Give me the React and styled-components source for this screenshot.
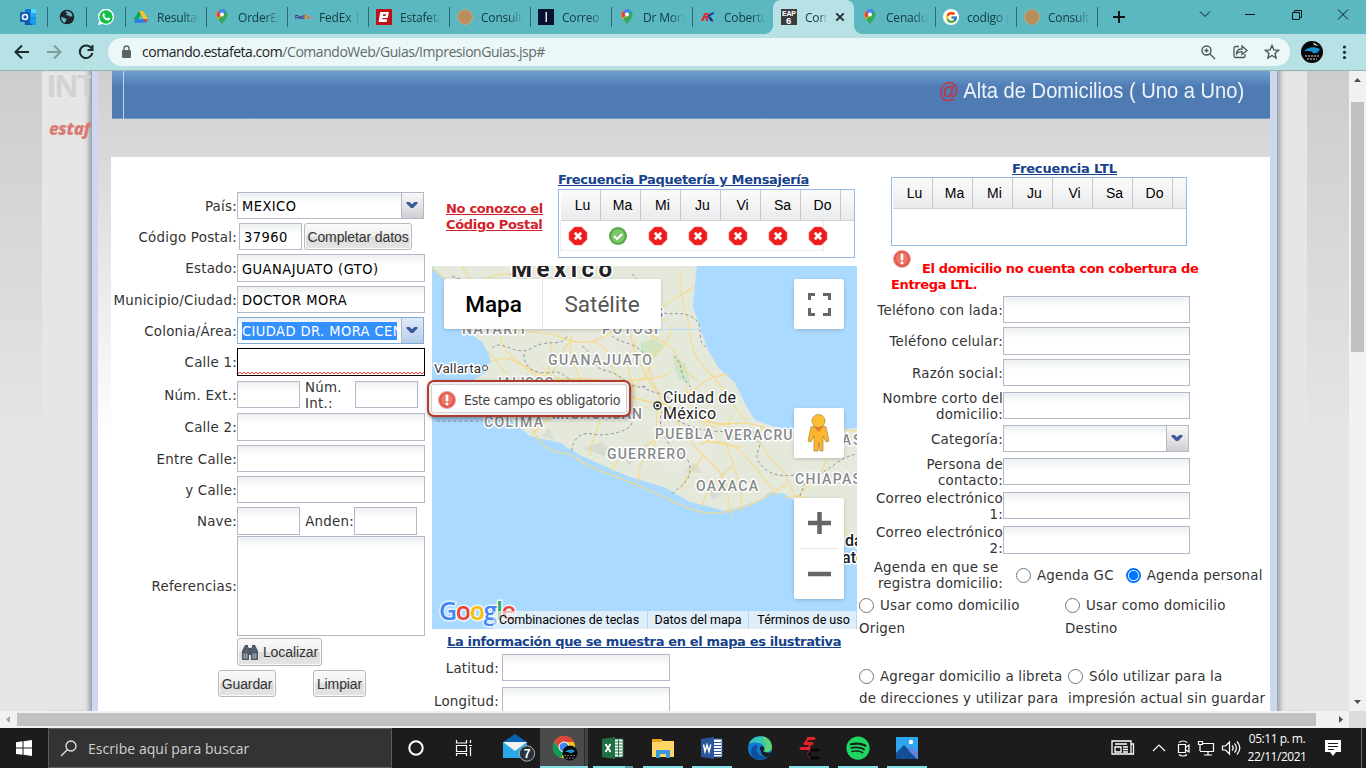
import React from "react";
import styled, { createGlobalStyle, css } from "styled-components";
import { FaSpotify } from "react-icons/fa";
import { FcGoogle } from "react-icons/fc";

const verdana = `"DejaVu Sans", Verdana, sans-serif`;
const tahoma = `"DejaVu Sans Condensed", "DejaVu Sans", Tahoma, sans-serif`;
const segoe = `"Open Sans", "Segoe UI", sans-serif`;
const arial = `"Liberation Sans", Arial, sans-serif`;

const Global = createGlobalStyle`
  * { box-sizing: border-box; }
  body { margin: 0; overflow: hidden; }
  #root { width: 1366px; height: 768px; }
`;

const Screen = styled.div`
  width: 1366px;
  height: 768px;
  display: flex;
  flex-direction: column;
  overflow: hidden;
  font-family: ${verdana};
`;

/* ---------- browser chrome ---------- */

const TabStrip = styled.div`
  height: 34px;
  flex: none;
  display: flex;
  padding-left: 8px;
  background: #5bb8c1;
  font: 12px ${segoe};
  color: #123a3f;
`;

const Tab = styled.div`
  position: relative;
  width: ${(p) => (p.$pinned ? 39 : 81)}px;
  flex: none;
  display: flex;
  align-items: center;
  gap: 8px;
  padding-left: ${(p) => (p.$pinned ? 12 : 8)}px;
  ${(p) =>
    p.$active
      ? css`
          background: #b7e1e4;
          border-radius: 8px 8px 0 0;
          &::before, &::after {
            content: "";
            position: absolute;
            bottom: 0;
            width: 8px;
            height: 8px;
          }
          &::before { left: -8px; background: radial-gradient(circle at 0 0, transparent 7.5px, #b7e1e4 8px); }
          &::after { right: -8px; background: radial-gradient(circle at 100% 0, transparent 7.5px, #b7e1e4 8px); }
        `
      : p.$line &&
        css`
          &::after {
            content: "";
            position: absolute;
            right: -1px;
            top: 7px;
            width: 1px;
            height: 20px;
            background: #2f6a70;
          }
        `}
`;

const TabIcon = styled.span`
  width: 16px;
  height: 16px;
  flex: none;
  display: flex;
  svg { display: block; width: 16px; height: 16px; }
`;

const TabTitle = styled.span`
  width: ${(p) => p.$w || 42}px;
  overflow: hidden;
  white-space: nowrap;
  line-height: 17px;
  letter-spacing: -0.2px;
  mask-image: linear-gradient(90deg, #000 65%, transparent);
`;

const WindowButtons = styled.div`
  flex: 1;
  display: flex;
  align-items: center;
  svg { display: block; flex: none; }
`;

const Toolbar = styled.div`
  height: 37px;
  flex: none;
  display: flex;
  align-items: center;
  padding-left: 13px;
  background: #b7e1e4;
  border-bottom: 1px solid #93b4b7;
  svg { display: block; flex: none; }
`;

const NavButtons = styled.div`
  width: 95px;
  display: flex;
  gap: 14px;
`;

const Omnibox = styled.div`
  width: 1182px;
  height: 28px;
  display: flex;
  align-items: center;
  padding: 0 9px 0 12px;
  border-radius: 14px;
  background: #ecf8f8;
  font: 14px ${segoe};
  color: #61696b;
`;

const Url = styled.span`
  flex: 1;
  margin-left: 10px;
  padding-bottom: 1px;
  white-space: nowrap;
  letter-spacing: -0.46px;
  b { font-weight: 400; color: #1d2224; }
`;

const OmniIcons = styled.div`
  display: flex;
  gap: 14px;
`;

const Avatar = styled.span`
  margin: 0 11px 0 11px;
  display: flex;
`;

/* ---------- page ---------- */

const Viewport = styled.div`
  height: 640px;
  flex: none;
  display: flex;
`;

const PageBack = styled.div`
  width: ${(p) => p.$w}px;
  flex: none;
  background: linear-gradient(#cdcdcd, #e6e6e6 380px);
`;

const SidePage = styled.div`
  width: ${(p) => p.$w}px;
  flex: none;
  overflow: hidden;
  background: #e6e6e6;
  box-shadow: inset ${(p) => (p.$right ? "5px" : "-5px")} 0 5px -3px #9b9b9b;
`;

const FadedTitle = styled.div`
  padding-left: 5px;
  font: bold 32px/30px "Liberation Sans", Arial, sans-serif;
  letter-spacing: -1px;
  color: #d2d2d2;
`;

const FadedBrand = styled.div`
  margin-top: 17px;
  padding-left: 7px;
  font: italic 800 17px/22px "Open Sans", sans-serif;
  letter-spacing: -0.5px;
  color: #da7c74;
`;

const Frame = styled.div`
  width: ${(p) => p.$w}px;
  flex: none;
  background: #cdd9ea;
  ${(p) => (p.$right ? "border-right" : "border-left")}: 1px solid #8fa8cc;
`;

const Dialog = styled.div`
  width: 1172px;
  flex: none;
  padding-left: 13px;
  background: linear-gradient(#cfcfcf, #d9d9d9 86px, #fff 370px);
`;

const Banner = styled.div`
  height: 48px;
  margin-left: 1px;
  padding: 0 26px 8px 11px;
  display: flex;
  justify-content: space-between;
  background: linear-gradient(#6f9fd0, #4f7bb3 16px);
  border-bottom: 1px solid #7b9cc9;
`;

const BannerRule = styled.div`
  width: 1px;
  height: 48px;
  background: #c3d3e8;
`;

const BannerTitle = styled.div`
  font: 22px/39px ${arial};
  color: #eef3fa;
  white-space: nowrap;
  transform: scaleX(0.915);
  transform-origin: right center;
  span { color: #c9303a; }
`;

const Panel = styled.div`
  height: 554px;
  margin-top: 38px;
  display: flex;
  overflow: hidden;
  background: #fff;
  color: #333;
  font-size: 13.4px;
  letter-spacing: 0.24px;
  line-height: 16px;
`;

const LeftColumn = styled.div`
  width: 317px;
  padding-top: 35px;
  flex: none;
`;

const MidColumn = styled.div`
  width: 430px;
  flex: none;
  padding-left: 4px;
`;

const RightColumn = styled.div`
  width: 412px;
  flex: none;
`;

const Row = styled.div`
  height: ${(p) => p.$h || 27}px;
  margin-top: ${(p) => p.$mt ?? 4}px;
  display: flex;
  align-items: center;
`;

const Label = styled.label`
  width: ${(p) => p.$w || 126}px;
  flex: none;
  padding: 2px 0 0 ${(p) => p.$pl || 0}px;
  text-align: ${(p) => p.$align || "right"};
  white-space: pre-line;
`;

const fieldLook = css`
  border: 1px solid #b5b8c8;
  background: linear-gradient(#eceff0, #fff 10px);
`;

const Field = styled.div`
  width: ${(p) => p.$w || 188}px;
  height: 100%;
  flex: none;
  margin-left: ${(p) => p.$ml || 0}px;
  padding: 1px 0 0 4px;
  display: flex;
  align-items: center;
  font-family: ${tahoma};
  font-size: 14.5px;
  letter-spacing: 0.48px;
  color: #000;
  white-space: nowrap;
  ${fieldLook}
  ${(p) => p.$invalid && css`border-color: #000; background: #fff; padding: 0; align-items: flex-end;`}
`;

const Select = styled.div`
  width: ${(p) => p.$w || 187}px;
  height: 100%;
  flex: none;
  display: flex;
  align-items: center;
  font-family: ${tahoma};
  font-size: 14.5px;
  letter-spacing: 0.45px;
  color: #000;
  ${fieldLook}
  border-color: ${(p) => (p.$focus ? "#7eadd9" : "#b5b8c8")};
`;

const SelectValue = styled.span`
  flex: 1;
  margin: 0 4px;
  height: 18px;
  line-height: 18px;
  overflow: hidden;
  white-space: nowrap;
  ${(p) => p.$focus && css`background: #3390ff; color: #fff;`}
`;

const Trigger = styled.span`
  width: 22px;
  height: 100%;
  display: flex;
  align-items: center;
  justify-content: center;
  border-left: 1px solid #b5b8c8;
  padding: 0 2px 2px 0;
  background: ${(p) =>
    p.$focus ? "linear-gradient(#dfeaf8, #cbdcf1 50%, #b6cdea)" : "linear-gradient(#f7f7f7, #e6e6e8 50%, #cfcfd1)"};
`;

const Button = styled.button`
  height: 100%;
  width: ${(p) => p.$w}px;
  margin: 0 0 0 ${(p) => p.$ml || 0}px;
  padding: 0;
  display: flex;
  align-items: center;
  justify-content: center;
  gap: 4px;
  border: 1px solid #b9b9b9;
  border-radius: 3px;
  box-shadow: inset 0 0 0 1px #fafafa;
  background: linear-gradient(#fafafa, #efefef 48%, #dcdcdc 52%, #e4e4e4);
  font: 14px/16px ${arial};
  letter-spacing: -0.1px;
  white-space: nowrap;
  color: #333;
`;

const LinkTitle = styled.div`
  padding-left: ${(p) => p.$pl || 0}px;
  padding-top: ${(p) => p.$pt || 0}px;
  font-size: 13px;
  line-height: 16px;
  font-weight: 700;
  font-family: ${verdana};
  letter-spacing: ${(p) => p.$ls ?? -0.32}px;
  text-decoration: underline;
  color: ${(p) => p.$color || "#15428b"};
  white-space: pre-line;
`;

const FrequencyRow = styled.div`
  height: 109px;
  padding: 14px 0 0 14px;
  display: flex;
`;

const UnknownCode = styled.div`
  width: 112px;
  padding-top: 30px;
`;

const DayGrid = styled.div`
  width: ${(p) => p.$w || 297}px;
  height: 69px;
  border: 1px solid #99bbe8;
  margin: ${(p) => p.$m || 0};
`;

const DayHead = styled.div`
  height: 31px;
  display: flex;
  margin-left: ${(p) => p.$ml}px;
  border-bottom: 1px solid #d0d0d0;
  background: linear-gradient(#fafafa, #f4f4f5 50%, #e9eaec);
  font: 14px/31px ${arial};
  letter-spacing: 0;
  color: #000;
`;

const DayCell = styled.div`
  width: 40px;
  flex: none;
  padding-left: 4px;
  text-align: center;
  border-right: 1px solid #c8c8c8;
`;

const DayMarks = styled.div`
  width: 264px;
  height: 30px;
  margin-left: 1px;
  display: flex;
  border: 1px solid #ededed;
  border-top: 0;
`;

const Mark = styled.span`
  width: 40px;
  flex: none;
  display: flex;
  align-items: center;
  justify-content: center;
  padding: 0 6px 0 0;
`;

/* ---------- map ---------- */

const MapBox = styled.div`
  position: relative;
  width: 425px;
  height: 363px;
  background: #aadaff;
  letter-spacing: 0;
  > svg { display: block; }
`;

const MapTypes = styled.div`
  position: absolute;
  left: 12px;
  top: 13px;
  width: 217px;
  height: 50px;
  display: flex;
  background: #fff;
  border-radius: 2px;
  box-shadow: 0 1px 4px -1px rgba(0, 0, 0, 0.3);
  font: 22.5px/50px Roboto, sans-serif;
  color: #565656;
  text-align: center;
`;

const MapType = styled.div`
  width: ${(p) => p.$w}px;
  padding-left: ${(p) => (p.$on ? 1 : 0)}px;
  ${(p) => p.$on && css`color: #000; font-weight: 500; border-right: 1px solid #e6e6e6;`}
`;

const MapControl = styled.div`
  position: absolute;
  left: 362px;
  top: ${(p) => p.$top}px;
  width: 50px;
  height: ${(p) => p.$h || 50}px;
  background: #fff;
  border-radius: 2px;
  box-shadow: 0 1px 4px -1px rgba(0, 0, 0, 0.3);
  svg { display: block; }
`;

const MapFooter = styled.div`
  position: absolute;
  right: 0;
  bottom: 0;
  width: 364px;
  height: 18px;
  display: flex;
  font: 12.5px/17px Roboto, sans-serif;
  color: #000;
  white-space: nowrap;
`;

const MapNote = styled.span`
  width: ${(p) => p.$w}px;
  padding-left: ${(p) => p.$pl || 6}px;
  margin-right: 1px;
  background: linear-gradient(90deg, rgba(245, 245, 245, ${(p) => (p.$fade ? 0.55 : 0.7)}), rgba(245, 245, 245, 0.7) 20px);
`;

const ErrorTip = styled.div`
  position: absolute;
  left: -5px;
  top: 114px;
  width: 204px;
  height: 37px;
  display: flex;
  align-items: center;
  gap: 8px;
  padding: 2px 0 0 9px;
  border: 2px solid #b03a2e;
  border-radius: 7px;
  background: #fff;
  box-shadow: inset 0 0 0 2px #f0f0f0, inset 0 0 0 3px #d2d2d2, 1px 2px 4px rgba(0, 0, 0, 0.4);
  font: 14px/16px ${tahoma};
  letter-spacing: -0.3px;
  color: #444;
  white-space: nowrap;
`;

/* ---------- right column ---------- */

const CoverageError = styled.div`
  height: 44px;
  margin: 4px 0 2px 33px;
  font: bold 13px/16px ${verdana};
  letter-spacing: -0.37px;
  color: #f00;
  svg { display: block; }
`;

const CoverageLine = styled.div`
  display: flex;
  gap: 11px;
  height: 27px;
  margin-left: 2px;
  align-items: flex-start;
  span { padding-top: 11px; }
`;

const Radio = styled.span`
  display: inline-block;
  width: 15px;
  height: 15px;
  flex: none;
  margin: 0 6px 0 0;
  vertical-align: -3px;
  border-radius: 50%;
  border: 1px solid ${(p) => (p.$on ? "#0075ff" : "#767676")};
  ${(p) => p.$on && css`border-width: 2px; background: radial-gradient(circle, #0075ff 4.3px, #fff 5px);`}
`;

const RadioLabel = styled.span`
  display: flex;
  align-items: center;
  margin-left: ${(p) => p.$ml}px;
  white-space: nowrap;
`;

const RadioText = styled.span`
  padding-top: 1px;
  letter-spacing: 0.18px;
`;

const Choices = styled.div`
  display: flex;
  margin-top: ${(p) => p.$mt}px;
  height: 46px;
  line-height: ${(p) => p.$lh}px;
  letter-spacing: 0.19px;
`;

const Choice = styled.div`
  width: ${(p) => p.$w}px;
  flex: none;
  padding-left: ${(p) => p.$pl || 0}px;
  white-space: pre;
`;

/* ---------- scrollbars ---------- */

const VScroll = styled.div`
  width: 17px;
  flex: none;
  display: flex;
  flex-direction: column;
  align-items: center;
  background: #f1f1f1;
  svg { display: block; }
`;

const VThumb = styled.div`
  width: 13px;
  height: 250px;
  margin: 14px 0 342px;
  background: #c1c1c1;
`;

const HScroll = styled.div`
  height: 17px;
  flex: none;
  display: flex;
  align-items: center;
  background: #f1f1f1;
  svg { display: block; flex: none; }
`;

const HThumb = styled.div`
  width: 1299px;
  height: 13px;
  margin-right: 16px;
  background: #c1c1c1;
`;

const Corner = styled.div`
  width: 17px;
  height: 17px;
  background: #dcdcdc;
`;

/* ---------- taskbar ---------- */

const Taskbar = styled.div`
  height: 40px;
  flex: none;
  display: flex;
  background: #1c1c1c;
  font: 14px ${segoe};
  svg { display: block; flex: none; }
`;

const TaskSlot = styled.div`
  position: relative;
  width: ${(p) => p.$w}px;
  flex: none;
  display: flex;
  align-items: center;
  justify-content: center;
  padding-left: ${(p) => p.$pl || 0}px;
  background: ${(p) => (p.$active ? "linear-gradient(90deg, #4b4b4b 44px, #2c2c2c 44px, #2c2c2c 45px, #444 45px)" : "none")};
  &::after {
    content: "";
    display: ${(p) => (p.$open ? "block" : "none")};
    position: absolute;
    bottom: 0;
    left: ${(p) => (p.$active ? 0 : 5)}px;
    width: ${(p) => (p.$active ? 48 : 40)}px;
    height: 2px;
    background: ${(p) => (p.$stack ? "linear-gradient(90deg, #84dfe6 32px, #5ba0a5 32px)" : "#84dfe6")};
  }
`;

const Search = styled.div`
  width: 344px;
  flex: none;
  display: flex;
  align-items: center;
  gap: 11px;
  padding-left: 11px;
  background: #333;
  border: 1px solid #5e5e5e;
  color: #d0d0d0;
  letter-spacing: 0.05px;
`;

const Tray = styled.div`
  width: 434px;
  flex: none;
  padding-left: 177px;
  display: flex;
  align-items: center;
`;

const Clock = styled.div`
  width: 62px;
  flex: none;
  margin: 0 16px 0 2px;
  font: 12px/18px ${segoe};
  letter-spacing: -0.48px;
  color: #fff;
  text-align: center;
  white-space: nowrap;
`;

const ShowDesktop = styled.div`
  margin-left: 19px;
  width: 1px;
  height: 40px;
  background: #666;
`;

/* ---------- icons ---------- */

const Outlook = () => (
  <svg viewBox="0 0 16 16">
    <path d="M5 0h11v14H5z" fill="#1490df" />
    <path d="M5 0h6v4H5z" fill="#0f78d4" /><path d="M11 0h5v4h-5z" fill="#50d9ff" />
    <path d="M11 4h5v4h-5z" fill="#28a8ea" /><path d="M4 16l12-8v8z" fill="#1a9ceb" /><path d="M4 9l9 7H5z" fill="#0a5cb0" />
    <rect y="3" width="10" height="10" rx="1" fill="#0f5db5" />
    <circle cx="5" cy="8" r="2.500" fill="none" stroke="#fff" strokeWidth="1.500" />
  </svg>
);
const Globe = () => (
  <svg viewBox="0 0 16 16">
    <circle cx="8" cy="8" r="7.300" fill="#1d2529" />
    <path d="M2.200 8c1.800-.2 2.300 1 3.800 1.200 1 .2 1.800.8 1.500 1.800-.4 1.200-1.500 1.500-1.700 3C3.500 13 2 11 2.200 8zM7 2.200C6 3.800 7.500 3.600 8.300 4.300c.3.900-1.500 1-1.300 1.900 1 .5 2-.2 2.800.5.800.8 1.700 1 3.700.8C13.400 5 12 3 10 2.500c-.8-.3-2-.4-3-.3z" fill="#62b7bf" />
  </svg>
);
const Whats = () => (
  <svg viewBox="0 0 16 16">
    <path d="M0 16l1.200-4A8 8 0 1 1 4.500 15z" fill="#fff" />
    <circle cx="8" cy="8" r="6.700" fill="#12c04a" />
    <path d="M5.200 4.200c.8-.5 1.200 0 1.700 1.500.1.500-.6.8-.5 1.100.6 1.300 1.600 2.200 3 2.700.4 0 .7-1.100 1.200-.9 1.700.7 1.800.9 1.300 1.900-1 1.300-2.600 1-4.300.2C5.500 9.500 3.500 6.500 5.200 4.200z" fill="#fff" />
  </svg>
);
const Drive = () => (
  <svg viewBox="0 0 16 16">
    <path d="M6 2h4l-7 11.500L1 10z" fill="#0da35a" /><path d="M6 2h4l5.200 8.500h-4.500z" fill="#ffc41d" />
    <path d="M1 13.800l2.300-3.500h12L13 13.800z" fill="#2f78e8" /><path d="M11 10.300h4.200L13 13.800z" fill="#ea4335" />
  </svg>
);
const Pin = () => (
  <svg viewBox="0 0 16 16">
    <path d="M8 16C7 12 2.500 10 2.500 5.500a5.500 5.500 0 0 1 11 0C13.500 10 9 12 8 16z" fill="#34a853" />
    <path d="M2.600 6.500C2 3 4 .6 7 .1l3 3.900-5.700 6.200C3.300 9 2.700 8 2.600 6.500z" fill="#fbbc04" />
    <path d="M3.800 2L8 5.600 4 9C2 6 2.300 3.800 3.800 2z" fill="#ea4335" />
    <path d="M3.800 2C6 -.8 10.500-.6 12.300 2.200L8.500 6.200z" fill="#4285f4" />
    <circle cx="8" cy="5.400" r="2" fill="#fff" />
  </svg>
);
const SvgWord = styled.text`
  font-family: "Liberation Sans", Arial, sans-serif;
  font-weight: 700;
`;
const Fedex = () => (
  <svg viewBox="0 0 16 16">
    <SvgWord x="0" y="10" fontSize="6" fill="#4d148c" textLength="9">Fed</SvgWord>
    <SvgWord x="9" y="10" fontSize="6" fill="#ff6600" textLength="7">Ex</SvgWord>
  </svg>
);
const Estafeta = () => (
  <svg viewBox="0 0 16 16">
    <rect width="16" height="16" rx="1" fill="#c00d17" />
    <path d="M5 3h8l-1.300 6H6.500l-.3 1.300h5L10.700 13H3.500C2.800 13 2.400 12.500 2.600 12L4 4.200C4.100 3.500 4.400 3 5 3zM7.300 5.200l-.4 1.900h2.600l.4-1.900z" fill="#fff" fillRule="evenodd" />
  </svg>
);
const Coin = () => (
  <svg viewBox="0 0 16 16"><circle cx="8" cy="8" r="7.500" fill="#b88e5c" stroke="#d0b083" strokeWidth=".7" /></svg>
);
const Mail = () => (
  <svg viewBox="0 0 16 16"><rect width="16" height="16" fill="#07122e" /><rect x="7.500" y="3" width="1.500" height="10" fill="#dfe4ee" /></svg>
);
const Rk = () => (
  <svg viewBox="0 0 16 16">
    <path d="M1 12l3.500-8H8c1.500 0 1.500 3-.5 4l.5 4H6l-.5-3.500h-.7L3.200 12zM5.700 5.500L5.300 7h1.200c.8-.3.900-1.500.2-1.500z" fill="#e3242b" fillRule="evenodd" />
    <path d="M8 8l6-4h-2L9 6zM8.500 8.500L11 12h2l-2.500-4z" fill="#1b3a93" stroke="#1b3a93" />
  </svg>
);
const Eap = () => (
  <svg viewBox="0 0 16 16">
    <rect width="16" height="16" fill="#3c3c3c" />
    <SvgWord x="1" y="6.700" fontSize="7" fill="#fff" textLength="14">EAP</SvgWord>
    <SvgWord x="5" y="14.500" fontSize="9.500" fill="#fff">6</SvgWord>
  </svg>
);
const GoogleDisc = styled.span`
  width: 16px;
  height: 16px;
  display: flex;
  align-items: center;
  justify-content: center;
  border-radius: 50%;
  background: #fff;
  && svg { width: 13px; height: 13px; }
`;
const Stroke = ({ size = 16, d, w = 1.5, color = "#1d2b2e", vb = 16, fill = "none" }) => (
  <svg width={size} height={size} viewBox={`0 0 ${vb} ${vb}`} fill={fill} stroke={color} strokeWidth={w}>
    <path d={d} />
  </svg>
);

const Cross = () => (
  <svg width="20" height="20" viewBox="0 0 20 20">
    <path d="M6.500 1h7L19 6.500v7L13.500 19h-7L1 13.500v-7z" fill="#ee1c1c" stroke="#f66" strokeWidth=".6" />
    <path d="M6.800 6.800l6.400 6.400M13.200 6.800l-6.400 6.400" stroke="#fff" strokeWidth="2.700" />
  </svg>
);
const Check = () => (
  <svg width="20" height="20" viewBox="0 0 20 20">
    <circle cx="10" cy="10" r="9" fill="#53ab46" /><circle cx="10" cy="10" r="6.800" fill="#7cc56d" />
    <path d="M6 10l3 3 5.200-5" fill="none" stroke="#fff" strokeWidth="2.200" />
  </svg>
);
const Alert = () => (
  <svg width="18" height="18" viewBox="0 0 18 18">
    <circle cx="9" cy="9" r="8.500" fill="#e0594d" stroke="#eaa59d" /><circle cx="9" cy="8.500" r="6" fill="#ec7769" />
    <rect x="7.700" y="3.500" width="2.600" height="7" rx="1.200" fill="#fff" /><circle cx="9" cy="13" r="1.500" fill="#fff" />
  </svg>
);
const Arrow = () => (
  <svg width="12" height="8" viewBox="0 0 12 8"><path d="M.5 1h3L6 3.300 8.500 1h3v1.500L7 7H5L.5 2.500z" fill="#3b5998" /></svg>
);
const Binoculars = () => (
  <svg width="18" height="17" viewBox="0 0 18 17">
    <path d="M1 7l2-4 1-2h3v2l1 1h2l1-1V1h3l1 2 2 4v9h-7v-5H8v5H1z" fill="#4c5761" />
    <path d="M2.500 9.500h4v5h-4zM11.500 9.500h4v5h-4z" fill="#97a9b8" /><path d="M4 4h3M11 4h3M2.500 7h5M10.500 7h5M4.500 10v4M13.500 10v4" stroke="#66737f" />
  </svg>
);
const Wave = () => (
  <svg width="186" height="4" viewBox="0 0 186 4">
    <path d={"M0 3" + Array.from({ length: 47 }, () => "l2-2l2 2").join("")} fill="none" stroke="#f33" />
  </svg>
);

/* ---------- map drawing ---------- */

const roads = [
  "M0 2c12 10 20 18 30 20s20-12 40-14 40 20 60 22 40-10 60 0 30 20 45 25",
  "M30 0c10 20 30 30 35 50s0 30 20 45 40 20 60 18 30 5 48 2 30 0 45-8",
  "M262 20c-10 10-30 15-38 30s0 40-8 55-20 15-26 30",
  "M250 5c-4 30 6 40 8 62s10 30 20 40 20 30 38 50",
  "M60 95c20-8 30 5 45 15s30-2 45 8 25 12 40 12 25 8 42 8",
  "M56 85c8 12 20 20 28 40s10 30 22 48 30 10 40 20 50 20 90 40 50 15 70 10 30-15 50-25",
  "M100 170c10-15 20-20 35-25s30 5 45-8 30 0 45 0 20 12 30 12 15 12 30 12",
  "M140 70c-6 20 5 30 8 45s20 20 20 35-10 20-10 40",
  "M226 140c-5 20 5 30-8 45s-12 20-10 32",
  "M232 140c15 15 20 30 35 45s25 20 28 40 5 20 5 26",
  "M195 60c8 20 8 30 16 45s15 20 20 33",
  "M232 138c12-10 25-8 35-18s20-10 30-12",
  "M235 145c20 0 30 10 48 12s25-2 42 2 30 20 45 14 25-12 55-8",
  "M330 160c-8 20 8 30 18 42s10 20 15 28",
  "M300 150c-12 15-5 30 0 45s12 30 8 50",
  "M180 205c5-15 20-15 30-22s20-20 45-14 30 10 55 12",
  "M365 232c10-15 25-20 30-40s10-15 30-24",
  "M352 232c25-8 35 10 50 22s15 20 23 25",
  "M70 60c20 8 40 5 55 10s30 15 60-8",
  "M85 125c12-8 20 0 30-10s10-30 25-40",
  "M110 100c10 18 25 20 42 20M158 118c-2 15 8 20 18 28s20 0 40-5",
  "M268 178c10-5 20-2 32 2s25 25 46 50",
  "M160 75c12 5 20 12 20 25s15 12 20 25M205 75c-10 15-12 25-5 40s0 15 5 25",
  "M215 65c10 10 25 12 30 25s8 15 20 25M118 75c5 15-5 20 0 35s20 15 30 22",
  "M240 60c-2 20-20 25-22 40s10 25 12 38M255 120c-5 12 5 22 15 30s15 10 28 8",
  "M270 240c5-20 15-25 30-40M250 225c0-15 15-22 20-35",
];
const borders = [
  "M20 10c20 10 35-5 40 20s10 10 15 30M78 8c10 0 20 10 20 20s25 20 40 30",
  "M60 82c10-10 25 10 40 0s30 0 35-12M92 88c0 20 20 20 30 18s15 15 35 8",
  "M150 80c15 10 5 20 25 25s20 20 40 15",
  "M200 8c15 12 0 25 20 35s25 0 40 8 2 25 15 30",
  "M5 155h90M140 185c0-12 10-20 20-17s40-2 40-12-10-12 0-22",
  "M240 228c8-8 18-12 18-25s-10-15-18-22-15-25-10-35",
  "M210 120c10 10 30 5 28 18s10 20 30 25 35 0 45 5",
  "M320 165c20 15-5 20 10 35s30 8 50 8 20-15 45-20M368 230l8-22",
  "M242 90c10 8 5 20 14 28s0 12 10 20M180 70c8 8 25 5 35 22",
];
const MapText = styled.text`
  font-family: Roboto, sans-serif;
  font-size: ${(p) => p.$size || 14}px;
  font-weight: ${(p) => p.$weight || 500};
  fill: ${(p) => p.$fill || "#858a8a"};
  stroke: #fff;
  stroke-width: 3px;
  stroke-linejoin: round;
  paint-order: stroke;
`;
const LogoText = styled.text`
  font-family: "Open Sans", Roboto, sans-serif;
  font-size: 25px;
  font-weight: 600;
  stroke: #fff;
  stroke-width: 3px;
  stroke-opacity: 0.75;
  paint-order: stroke;
`;
const land =
  "M0 0l13 13 9 22 8 27 20 14 6 10 3 10-9 6 3 5-13 8 0 12 14 14 20 8 14 13 10 8 12 3 20 4 4 4 14 8 24 11 26 11 34 10 26 15 17 4 17 5 16-4 20-7 10-8 14 2 33 20L425 284V162l-12 1-50 3-17-4-23-8 -8-13-12-24-17-16-10-17-6-17-9-26 2-24 2-17z";

const Mexico = () => (
  <svg width="425" height="363" viewBox="0 0 425 363">
    <rect width="425" height="363" fill="#aadaff" />
    <path d={land} fill="#e4e9dc" />
    <path d="M70 0h70l-5 50-25 20-35-25zM140 15l50 5-10 70-45-10zM215 150l60 15 15 50-60-15z" fill="#ebe7e0" opacity=".7" />
    <path d="M208 77l16-4 8 8-8 10-14-3zM290 165l35 0 5 12-35-5zM90 10l18 5-8 14zM240 90l14 8 4 20-12-6z" fill="#c9e4c2" opacity=".8" />
    <path d="M150 182l20-6 8 8-6 6zM250 205l14-8 6 10zM275 222l16 4-10 8zM110 170l12 4-5-12zM190 190l15 0-8 10z" fill="#d2d8cc" opacity=".7" />
    <g fill="none" stroke="#f8da86" strokeWidth="1.100">{roads.map((d) => <path key={d} d={d} />)}</g>
    <g fill="none" stroke="#93999b" strokeWidth="1" strokeDasharray="3 2.500">{borders.map((d) => <path key={d} d={d} />)}</g>
    <path d="M165 235V363M229 63.500h196" stroke="#b3deff" strokeWidth="1" />
    <MapText x="79" y="10.500" $size={24} $weight={700} $fill="#222" textLength="101">México</MapText>
    <MapText x="30" y="68" textLength="65">NAYARIT</MapText>
    <MapText x="170" y="68" textLength="56">POTOSÍ</MapText>
    <MapText x="176" y="52" textLength="55">LUIS</MapText>
    <MapText x="116" y="99" textLength="104">GUANAJUATO</MapText>
    <MapText x="62" y="122" textLength="60">JALISCO</MapText>
    <MapText x="120" y="153" textLength="90">MICHOACÁN</MapText>
    <MapText x="52" y="161" textLength="59">COLIMA</MapText>
    <MapText x="223" y="173" textLength="58">PUEBLA</MapText>
    <MapText x="292" y="174" textLength="78">VERACRUZ</MapText>
    <MapText x="175" y="193" textLength="79">GUERRERO</MapText>
    <MapText x="264" y="225" textLength="62">OAXACA</MapText>
    <MapText x="363" y="218" textLength="66">CHIAPAS</MapText>
    <MapText x="378" y="179" textLength="74">TABASCO</MapText>
    <MapText x="2" y="107" $size={13.5} $weight={400} $fill="#333" textLength="47">Vallarta</MapText>
    <circle cx="53" cy="102" r="2.500" fill="#fff" stroke="#444" />
    <MapText x="231" y="137" $size={16} $weight={400} $fill="#222" textLength="73">Ciudad de</MapText>
    <MapText x="231" y="153" $size={16} $weight={400} $fill="#222" textLength="53">México</MapText>
    <circle cx="225.500" cy="139.500" r="3.500" fill="#fff" stroke="#222" strokeWidth="1.300" /><circle cx="225.500" cy="139.500" r="1.500" fill="#222" />
    <MapText x="413" y="280" $size={16} $weight={500} $fill="#222">da</MapText>
    <MapText x="410" y="297" $size={16} $weight={500} $fill="#222">ate</MapText>
    <LogoText x="7" y="354" textLength="77">
      <tspan fill="#4285f4">G</tspan><tspan fill="#ea4335">o</tspan><tspan fill="#fbbc04">o</tspan>
      <tspan fill="#4285f4">g</tspan><tspan fill="#34a853">l</tspan><tspan fill="#ea4335">e</tspan>
    </LogoText>
  </svg>
);

/* ---------- composition ---------- */

const tabs = [
  { icon: <Outlook />, pinned: true }, { icon: <Globe />, pinned: true }, { icon: <Whats />, pinned: true },
  { icon: <Drive />, title: "Resultados" }, { icon: <Pin />, title: "OrderExpress" }, { icon: <Fedex />, title: "FedEx | R" },
  { icon: <Estafeta />, title: "Estafeta" }, { icon: <Coin />, title: "Consulta" }, { icon: <Mail />, title: "Correo -" },
  { icon: <Pin />, title: "Dr Mora" }, { icon: <Rk />, title: "Cobertura", plain: true },
  { icon: <Eap />, title: "Comando", active: true }, { icon: <Pin />, title: "Cenaduria" },
  { icon: <GoogleDisc><FcGoogle /></GoogleDisc>, title: "codigo p" }, { icon: <Coin />, title: "Consulta" },
];
const days = ["Lu", "Ma", "Mi", "Ju", "Vi", "Sa", "Do"];

const Days = ({ marks, m, w, inset = 2 }) => (
  <DayGrid $m={m} $w={w}>
    <DayHead $ml={inset}>{days.map((d) => <DayCell key={d}>{d}</DayCell>)}</DayHead>
    {marks && <DayMarks>{days.map((d) => <Mark key={d}>{d === "Ma" ? <Check /> : <Cross />}</Mark>)}</DayMarks>}
  </DayGrid>
);

const Combo = ({ value, focus, w }) => (
  <Select $w={w} $focus={focus}>
    <SelectValue $focus={focus}>{value}</SelectValue>
    <Trigger $focus={focus}><Arrow /></Trigger>
  </Select>
);

const contactRows = [
  ["Teléfono con lada:", 0, 27], ["Teléfono celular:", 4, 28], ["Razón social:", 4, 27],
  ["Nombre corto del\ndomicilio:", 6, 27], ["Categoría:", 6, 27, true], ["Persona de\ncontacto:", 6, 27],
  ["Correo electrónico\n1:", 7, 27], ["Correo electrónico\n2:", 7, 28],
];

export default function App() {
  return (
    <Screen>
      <Global />
      <TabStrip>
        {tabs.map((t, i) => (
          <Tab key={i} $pinned={t.pinned} $active={t.active} $line={!t.plain}>
            <TabIcon>{t.icon}</TabIcon>
            {t.title && <TabTitle $w={t.active ? 22 : 42}>{t.title}</TabTitle>}
            {t.active && <Stroke size={10} vb={10} w={1.8} d="M1.300 1.300l7.400 7.400M8.700 1.300l-7.400 7.400" />}
          </Tab>
        ))}
        <WindowButtons>
          <svg width="269" height="34" viewBox="0 0 269 34" fill="none" stroke="#0c1719">
            <path d="M16 17h12M22 11v12" strokeWidth="2" />
            <path d="M103 11.500l5 5 5-5M148 14.500h10" />
            <path d="M195.500 12.500h7v7h-7zM197.500 12.500v-2h7v7h-2M241 9.500l10 10M251 9.500l-10 10" />
          </svg>
        </WindowButtons>
      </TabStrip>
      <Toolbar>
        <NavButtons>
          <Stroke size={18} vb={18} w={2} d="M16 9H3M9 2.500L2.500 9 9 15.500" />
          <Stroke size={18} vb={18} w={2} color="#7d9ea1" d="M2 9h13M9 2.500L15.500 9 9 15.500" />
          <Stroke size={18} vb={18} w={2} d="M14.500 5.500A6.300 6.300 0 1 0 15.300 10M15.500 2v5h-5" />
        </NavButtons>
        <Omnibox>
          <svg width="12" height="14" viewBox="0 0 12 14">
            <rect x="2" y="5" width="9" height="8" rx="1" fill="#5a6365" />
            <path d="M4 5V3.500a2.500 2.500 0 0 1 5 0V5" fill="none" stroke="#5a6365" strokeWidth="1.400" />
          </svg>
          <Url><b>comando.estafeta.com</b>/ComandoWeb/Guias/ImpresionGuias.jsp#</Url>
          <OmniIcons>
            <Stroke size={18} vb={18} w={1.4} color="#4b5659" d="M12 7.500a4.500 4.500 0 1 1-9 0a4.500 4.500 0 0 1 9 0M11 11l5 5M7.500 5.500v4M5.500 7.500h4" />
            <Stroke size={18} vb={18} w={1.3} color="#4b5659" d="M8 3.500H4.500a1.500 1.500 0 0 0-1.500 1.500v8a1.500 1.500 0 0 0 1.500 1.500h8a1.500 1.500 0 0 0 1.500-1.500v-2M5.500 11c0-3 2-5 5.500-5V3l5 4.500-5 4V8.700c-3 0-4.500.8-5.500 2.300z" />
            <Stroke size={18} vb={18} w={1.4} color="#4b5659" d="M9 2.500l1.900 4.400 4.700.4-3.600 3.100 1.100 4.600L9 12.500 4.900 15 6 10.400 2.400 7.300l4.700-.4z" />
          </OmniIcons>
        </Omnibox>
        <Avatar>
          <svg width="22" height="22" viewBox="0 0 22 22">
            <circle cx="11" cy="11" r="11" fill="#050607" />
            <path d="M3 10c4-4 10-5 16-2-1 3-4 5-7 4-1-2-4-2-9-2z" fill="#1591d6" />
            <path d="M12 1.500l6 3.500-5-1z" fill="#eee" /><path d="M4 15h14M6 18h10" stroke="#999" strokeWidth="1.600" strokeDasharray="2 1" />
          </svg>
        </Avatar>
        <svg width="20" height="18" viewBox="0 0 20 18" fill="#1d2b2e">
          <circle cx="10.500" cy="4" r="1.600" /><circle cx="10.500" cy="9.300" r="1.600" /><circle cx="10.500" cy="14.500" r="1.600" />
        </svg>
      </Toolbar>

      <Viewport>
        <PageBack $w={42} />
        <SidePage $w={49}>
          <FadedTitle>INT</FadedTitle>
          <FadedBrand>estaf</FadedBrand>
        </SidePage>
        <Frame $w={7} />
        <Dialog>
          <Banner>
            <BannerRule />
            <BannerTitle><span>@</span> Alta de Domicilios ( Uno a Uno)</BannerTitle>
          </Banner>
          <Panel>
            <LeftColumn>
              <Row $mt={0}><Label>País:</Label><Combo value="MEXICO" /></Row>
              <Row>
                <Label>Código Postal:</Label><Field $w={63} $ml={2}>37960</Field>
                <Button $w={108} $ml={2}>Completar datos</Button>
              </Row>
              <Row $h={28}><Label>Estado:</Label><Field>GUANAJUATO (GTO)</Field></Row>
              <Row><Label>Municipio/Ciudad:</Label><Field>DOCTOR MORA</Field></Row>
              <Row><Label>Colonia/Área:</Label><Combo value="CIUDAD DR. MORA CENTRO" focus /></Row>
              <Row $h={28}><Label>Calle 1:</Label><Field $invalid><Wave /></Field></Row>
              <Row $mt={5}>
                <Label>Núm. Ext.:</Label><Field $w={63} />
                <Label $w={55} $pl={5} $align="left">{"Núm.\nInt.:"}</Label><Field $w={63} />
              </Row>
              <Row $mt={5} $h={28}><Label>Calle 2:</Label><Field /></Row>
              <Row><Label>Entre Calle:</Label><Field /></Row>
              <Row><Label>y Calle:</Label><Field /></Row>
              <Row $h={28}>
                <Label>Nave:</Label><Field $w={63} /><Label $w={54}>Anden:</Label><Field $w={63} />
              </Row>
              <Row $mt={1} $h={100}><Label>Referencias:</Label><Field /></Row>
              <Row $mt={2} $h={28}><Button $w={85} $ml={126}><Binoculars />Localizar</Button></Row>
              <Row><Button $w={58} $ml={107}>Guardar</Button><Button $w={53} $ml={37}>Limpiar</Button></Row>
            </LeftColumn>

            <MidColumn>
              <FrequencyRow>
                <UnknownCode><LinkTitle $color="#d2232a">{"No conozco el\nCódigo Postal"}</LinkTitle></UnknownCode>
                <div>
                  <LinkTitle $pt={1}>Frecuencia Paquetería y Mensajería</LinkTitle>
                  <Days marks m="1px 0 0" />
                </div>
              </FrequencyRow>
              <MapBox>
                <Mexico />
                <MapTypes><MapType $w={99} $on>Mapa</MapType><MapType $w={118}>Satélite</MapType></MapTypes>
                <MapControl $top={13}>
                  <Stroke size={50} vb={50} w={3} color="#666" d="M15.500 21v-5.500H21M29 15.500h6.500V21M35.500 29v6.500H29M21 35.500h-5.500V29" />
                </MapControl>
                <MapControl $top={142}>
                  <svg width="50" height="50" viewBox="0 0 50 50">
                    <path d="M17 19c4-2 11-2 15 0l3 14-3 1-3-6 0 15h-3l-1-9-1 9h-4l0-15-3 6-3-1z" fill="#fbb62d" stroke="#a8813a" strokeWidth=".7" />
                    <path d="M20 19h9l-4.500 5z" fill="#e57c2e" /><circle cx="24.500" cy="13" r="6.500" fill="#fcbf30" stroke="#a8813a" strokeWidth=".7" />
                  </svg>
                </MapControl>
                <MapControl $top={232} $h={101}>
                  <svg width="50" height="101" viewBox="0 0 50 101">
                    <path d="M14 25h23M25.500 14v22M14 76h23" stroke="#666" strokeWidth="4.500" /><path d="M6 50.500h38" stroke="#e6e6e6" />
                  </svg>
                </MapControl>
                <MapFooter>
                  <MapNote $w={154} $fade>Combinaciones de teclas</MapNote>
                  <MapNote $w={101} $pl={7}>Datos del mapa</MapNote>
                  <MapNote $w={107} $pl={8}>Términos de uso</MapNote>
                </MapFooter>
                <ErrorTip><Alert />Este campo es obligatorio</ErrorTip>
              </MapBox>
              <Row $mt={4} $h={18}>
                <LinkTitle $pl={15} $ls={-0.35}>La información que se muestra en el mapa es ilustrativa</LinkTitle>
              </Row>
              <Row $mt={3}><Label $w={67}>Latitud:</Label><Field $w={168} $ml={3} /></Row>
              <Row $mt={6}><Label $w={67}>Longitud:</Label><Field $w={168} $ml={3} /></Row>
            </MidColumn>

            <RightColumn>
              <Row $mt={4} $h={16}><LinkTitle $pl={154} $ls={-0.15}>Frecuencia LTL</LinkTitle></Row>
              <Days m="0 0 0 33px" w={296} inset={1} />
              <CoverageError>
                <CoverageLine><Alert /><span>El domicilio no cuenta con cobertura de</span></CoverageLine>
                Entrega LTL.
              </CoverageError>
              {contactRows.map(([text, mt, h, combo]) => (
                <Row key={text} $mt={mt} $h={h}>
                  <Label $w={145}>{text}</Label>
                  {combo ? <Combo value="" w={186} /> : <Field $w={187} />}
                </Row>
              ))}
              <Row $mt={5} $h={32}>
                <Label $w={145}>{"Agenda en que se\u00a0\nregistra domicilio:"}</Label>
                <RadioLabel $ml={13}><Radio /><RadioText>Agenda GC</RadioText></RadioLabel>
                <RadioLabel $ml={12}><Radio $on /><RadioText>Agenda personal</RadioText></RadioLabel>
              </Row>
              <Choices $mt={3} $lh={23}>
                <Choice $w={207} $pl={1}><Radio />{"Usar como domicilio\nOrigen"}</Choice>
                <Choice $w={205}><Radio />{"Usar como domicilio\nDestino"}</Choice>
              </Choices>
              <Choices $mt={26} $lh={22}>
                <Choice $w={210} $pl={1}><Radio />{"Agregar domicilio a libreta\nde direcciones y utilizar para"}</Choice>
                <Choice $w={202}><Radio />{"Sólo utilizar para la\nimpresión actual sin guardar"}</Choice>
              </Choices>
            </RightColumn>
          </Panel>
        </Dialog>
        <Frame $w={8} $right />
        <SidePage $w={29} $right />
        <PageBack $w={42} />
        <VScroll>
          <svg width="17" height="17" viewBox="0 0 17 17"><path d="M5 11l3.500-4 3.500 4z" fill="#505050" /></svg>
          <VThumb />
          <svg width="17" height="17" viewBox="0 0 17 17"><path d="M5 6l3.500 4 3.500-4z" fill="#505050" /></svg>
        </VScroll>
      </Viewport>

      <HScroll>
        <svg width="17" height="17" viewBox="0 0 17 17"><path d="M10 5L6 8.500l4 3.500z" fill="#a3a3a3" /></svg>
        <HThumb />
        <svg width="17" height="17" viewBox="0 0 17 17"><path d="M7 5l4 3.500L7 12z" fill="#505050" /></svg>
        <Corner />
      </HScroll>

      <Taskbar>
        <TaskSlot $w={48}>
          <svg width="16" height="16" viewBox="0 0 16 16"><path d="M0 2.200L6.500 1.300v6.300H0zM7.500 1.200L16 0v7.600H7.500zM0 8.500h6.500v6.300L0 13.900zM7.500 8.500H16V16l-8.500-1.200z" fill="#fff" /></svg>
        </TaskSlot>
        <Search>
          <Stroke size={17} vb={17} w={1.3} color="#e4e4e4" d="M16 6a5 5 0 1 1-10 0a5 5 0 0 1 10 0M7.500 9.500L1 16" />
          Escribe aquí para buscar
        </Search>
        <TaskSlot $w={48}><svg width="18" height="18"><circle cx="9" cy="9" r="6.700" fill="none" stroke="#fff" strokeWidth="2" /></svg></TaskSlot>
        <TaskSlot $w={48}><Stroke size={18} vb={18} w={1.2} color="#fff" d="M1.500 1v3h10V1M1.500 6.500h10v6h-10zM1.500 17v-2.500h10V17M15.500 1v3M15.500 8v9M14 6.500h3" /></TaskSlot>
        <TaskSlot $w={52} $pl={6}>
          <svg width="36" height="30" viewBox="0 0 36 30">
            <path d="M4 9l12-8 12 8v16H4z" fill="#0864b1" /><path d="M4 9h24v16H4z" fill="#2aa9e8" /><path d="M4 9h24L16 18z" fill="#f1f1f1" />
            <circle cx="28" cy="20.500" r="7.700" fill="#28323a" stroke="#a7b0b5" />
            <SvgWord x="24.700" y="25" fontSize="12" fill="#fff">7</SvgWord>
          </svg>
        </TaskSlot>
        <TaskSlot $w={48} $pl={2} $active $open>
          <svg width="26" height="26" viewBox="0 0 26 26">
            <circle cx="12" cy="12" r="11" fill="#fbc116" /><path d="M2.500 6.500A11 11 0 0 1 22 7H12l-4 8z" fill="#db4437" />
            <path d="M2.500 6.500L8 15l4 2-3 6A11 11 0 0 1 2.500 6.500z" fill="#0f9d58" /><circle cx="12" cy="12" r="5" fill="#4285f4" stroke="#fff" />
            <circle cx="18" cy="18" r="7.500" fill="#08090a" /><path d="M13 17c4-3 7-3 10-1-2 2-5 3-7 1z" fill="#1b96d3" />
            <path d="M12 20.500h12M14 23h8" stroke="#777" strokeDasharray="2 1" />
          </svg>
        </TaskSlot>
        <TaskSlot $w={50} $open $stack>
          <svg width="24" height="24" viewBox="0 0 24 24">
            <path d="M12 3h10v18H12z" fill="#fff" stroke="#1e7145" /><path d="M14 6h7M14 9h7M14 12h7M14 15h7M14 18h7M17.500 4v16" stroke="#1e7145" />
            <path d="M1 3l13-2v22L1 21z" fill="#1e7145" /><path d="M4.500 8l5 8M9.500 8l-5 8" stroke="#fff" strokeWidth="1.800" />
          </svg>
        </TaskSlot>
        <TaskSlot $w={49} $pl={0} $open>
          <svg width="24" height="22" viewBox="0 0 24 22">
            <path d="M1 2h9l2 2h11v16H1z" fill="#ffd768" /><path d="M1 2h9l1 3H1z" fill="#e8a317" /><path d="M5 21v-8h14v8h-4v-4H9v4z" fill="#3b97dd" />
          </svg>
        </TaskSlot>
        <TaskSlot $w={49} $open>
          <svg width="24" height="24" viewBox="0 0 24 24">
            <path d="M12 3h10v18H12z" fill="#fff" stroke="#2b579a" /><path d="M14 6.500h7M14 9.500h7M14 12.500h7M14 15.500h7M14 18.500h7" stroke="#2b579a" />
            <path d="M1 3l13-2v22L1 21z" fill="#2b579a" /><path d="M3.500 8.500l1.500 7 2-6.500 2 6.500 1.800-7" fill="none" stroke="#fff" strokeWidth="1.500" />
          </svg>
        </TaskSlot>
        <TaskSlot $w={48}>
          <svg width="24" height="24" viewBox="0 0 24 24">
            <circle cx="12" cy="12" r="12" fill="#1179d3" /><path d="M1 8C5-2 21-3 24 11c0 5-5 6-9 4 3-4-1-8-5-8-4-1-7 0-9 1z" fill="#39c7b5" />
            <path d="M14 0c7 1 10 6 10 11 0 4-4 5-7 5l1-8z" fill="#6ddc5a" opacity=".7" /><path d="M10 9c-4 5 0 13 10 11-4 4-11 5-15 1S3 8 10 9z" fill="#0c4f9c" />
            <path d="M13 15c-2-2-1-5 1-5 3 1 3 4 1 5 2 2 6 2 9 1l-4 5c-5 0-7-3-7-6z" fill="#1c1c1c" />
          </svg>
        </TaskSlot>
        <TaskSlot $w={49} $pl={2} $open>
          <svg width="22" height="24" viewBox="0 0 22 24" fill="none" strokeWidth="3" strokeLinecap="round">
            <path d="M15 2.500H9M13 7.500H6M10 12.500H2" stroke="#e8202a" /><path d="M9 3L6 7M12 8l-3 4" stroke="#e8202a" strokeWidth="2" />
            <path d="M19 14h-6M10 17.500v2M13 22h6" stroke="#050505" /><path d="M10 14.500L8.500 18l2 4" stroke="#a31a1f" strokeWidth="1" />
          </svg>
        </TaskSlot>
        <TaskSlot $w={49} $open><FaSpotify size={24} color="#1ed760" /></TaskSlot>
        <TaskSlot $w={50} $open>
          <svg width="22" height="22" viewBox="0 0 22 22">
            <rect width="22" height="22" fill="#2fa5ee" /><path d="M0 16l8-8 14 14H0z" fill="#124f94" /><path d="M12 13l4-3 6 5v7h-1z" fill="#5d86dc" /><circle cx="15" cy="5" r="2.200" fill="#fff" />
          </svg>
        </TaskSlot>
        <Tray>
          <svg width="135" height="24" viewBox="0 0 135 24" fill="none" stroke="#fff" strokeWidth="1.200">
            <path d="M3 5h19v13H3zM22 8h2.500v10H5M6 8h12M6 11h6v5H6zM14 11h5M14 13.500h5M14 16h5" strokeWidth="1.300" />
            <path d="M44 15l6-6 6 6" /><path d="M69.500 8.500h7v8h-7zM77 11l3-2v7l-3-2M70 6.500c2-2 6-2 8 0M70 18.500c2 2 6 2 8 0" />
            <path d="M93.500 7.500h11v8H91M99 16v3M95 19h8M89.500 5.500h4v3h-4zM91 9v6" />
            <path d="M113.500 10h3l4-4v12l-4-4h-3zM123 9.500c1.500 1.500 1.500 3.500 0 5M125.500 7.500c2.500 2.500 2.500 6.500 0 9M128 5.500c3.500 4 3.500 9 0 13" />
          </svg>
          <Clock>05:11 p. m.<br />22/11/2021</Clock>
          <svg width="18" height="18" viewBox="0 0 18 18"><path d="M1 1h16v12h-5l-3 4-3-4H1z" fill="#fff" /><path d="M4 4.500h10M4 7.500h10M4 10.500h6" stroke="#1c1c1c" /></svg>
          <ShowDesktop />
        </Tray>
      </Taskbar>
    </Screen>
  );
}
